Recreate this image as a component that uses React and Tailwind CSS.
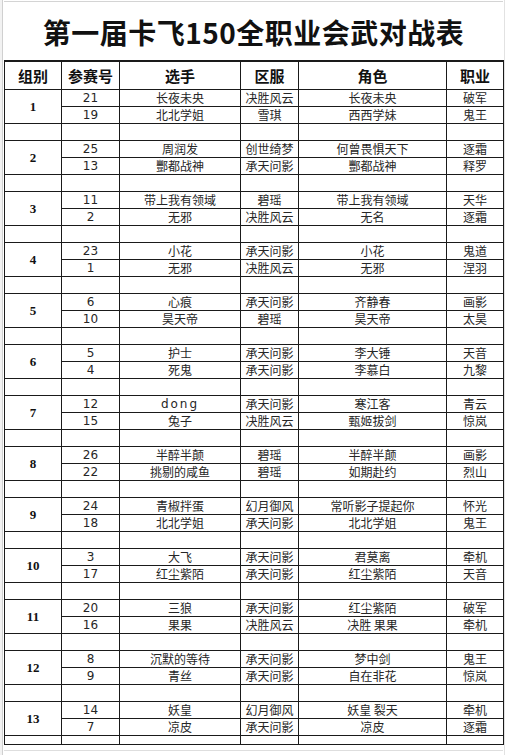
import React from "react";

const groups = [
  [["21", "长夜未央", "决胜风云", "长夜未央", "破军"], ["19", "北北学姐", "雪琪", "西西学妹", "鬼王"]],
  [["25", "周润发", "创世绮梦", "何曾畏惧天下", "逐霜"], ["13", "酆都战神", "承天问影", "酆都战神", "释罗"]],
  [["11", "带上我有领域", "碧瑶", "带上我有领域", "天华"], ["2", "无邪", "决胜风云", "无名", "逐霜"]],
  [["23", "小花", "承天问影", "小花", "鬼道"], ["1", "无邪", "决胜风云", "无邪", "涅羽"]],
  [["6", "心痕", "承天问影", "齐静春", "画影"], ["10", "昊天帝", "碧瑶", "昊天帝", "太昊"]],
  [["5", "护士", "承天问影", "李大锤", "天音"], ["4", "死鬼", "承天问影", "李慕白", "九黎"]],
  [["12", "dong", "承天问影", "寒江客", "青云"], ["15", "兔子", "决胜风云", "甄姬拔剑", "惊岚"]],
  [["26", "半醉半颠", "碧瑶", "半醉半颠", "画影"], ["22", "挑剔的咸鱼", "碧瑶", "如期赴约", "烈山"]],
  [["24", "青椒拌蛋", "幻月御风", "常听影子提起你", "怀光"], ["18", "北北学姐", "承天问影", "北北学姐", "鬼王"]],
  [["3", "大飞", "承天问影", "君莫离", "牵机"], ["17", "红尘紫陌", "承天问影", "红尘紫陌", "天音"]],
  [["20", "三狼", "承天问影", "红尘紫陌", "破军"], ["16", "果果", "决胜风云", "决胜 果果", "牵机"]],
  [["8", "沉默的等待", "承天问影", "梦中剑", "鬼王"], ["9", "青丝", "承天问影", "自在非花", "惊岚"]],
  [["14", "妖皇", "幻月御风", "妖皇 裂天", "牵机"], ["7", "凉皮", "承天问影", "凉皮", "逐霜"]],
];

const cell = "border border-[#1a1a1a] p-0 text-center align-middle leading-none";
const cjk = { fontFamily: '"Noto Sans CJK SC", "Noto Sans", sans-serif' };

const Spacer = ({ h = "h-[17px]" }) => (
  <tr className={h}>
    {[0, 1, 2, 3, 4, 5].map((i) => (
      <td key={i} className={cell}></td>
    ))}
  </tr>
);

const Row = ({ row, group, label }) => (
  <tr className="h-[17px] text-[12px] text-[#262626]">
    {group && (
      <td
        rowSpan={2}
        className={`${cell} font-bold text-[13px] text-[#111]`}
        style={{ fontFamily: '"Liberation Serif", serif' }}
      >
        {label}
      </td>
    )}
    <td className={cell} style={{ fontFamily: '"DejaVu Sans", sans-serif' }}>
      {row[0]}
    </td>
    <td className={`${cell} ${row[1] === "dong" ? "tracking-[2px]" : ""}`} style={row[1] === "dong" ? { fontFamily: '"DejaVu Sans", sans-serif' } : cjk}>
      {row[1]}
    </td>
    <td className={cell} style={cjk}>
      {row[2]}
    </td>
    <td className={cell} style={cjk}>
      {row[3]}
    </td>
    <td className={cell} style={cjk}>
      {row[4]}
    </td>
  </tr>
);

export default function App() {
  return (
    <div className="w-[509px] h-[755px] bg-white overflow-hidden relative" style={cjk}>
      <div className="absolute left-0 top-0 w-[3px] h-full bg-[#f2f2f2] border-r border-[#d0d0d0]"></div>
      <div className="absolute right-0 top-0 w-[5px] h-full border-l border-[#e2e2e2]"></div>
      <div className="pl-[4px] pt-[1px]">
        <div className="w-[499px] h-[59px] border-t border-[#d4d4d4] flex items-center justify-center pt-[2px]">
          <h1 className="text-[28px] font-bold text-[#111] tracking-[0.5px]" style={cjk}>
            第一届卡飞150全职业会武对战表
          </h1>
        </div>
        <table className="border-collapse table-fixed w-[499px]">
          <colgroup>
            <col className="w-[57px]" />
            <col className="w-[58px]" />
            <col className="w-[121px]" />
            <col className="w-[58px]" />
            <col className="w-[148px]" />
            <col className="w-[57px]" />
          </colgroup>
          <thead>
            <tr className="h-[28px] text-[15px] font-bold text-[#111]">
              {["组别", "参赛号", "选手", "区服", "角色", "职业"].map((t) => (
                <th key={t} className={`${cell} border-t-2`}>
                  {t}
                </th>
              ))}
            </tr>
          </thead>
          <tbody>
            {groups.map((g, i) => (
              <React.Fragment key={i}>
                {i > 0 && <Spacer />}
                <Row row={g[0]} group label={i + 1} />
                <Row row={g[1]} />
              </React.Fragment>
            ))}
            <Spacer h="h-[9px]" />
          </tbody>
        </table>
        <div className="w-[499px] h-[6px] border-b border-[#dedede]"></div>
      </div>
    </div>
  );
}
